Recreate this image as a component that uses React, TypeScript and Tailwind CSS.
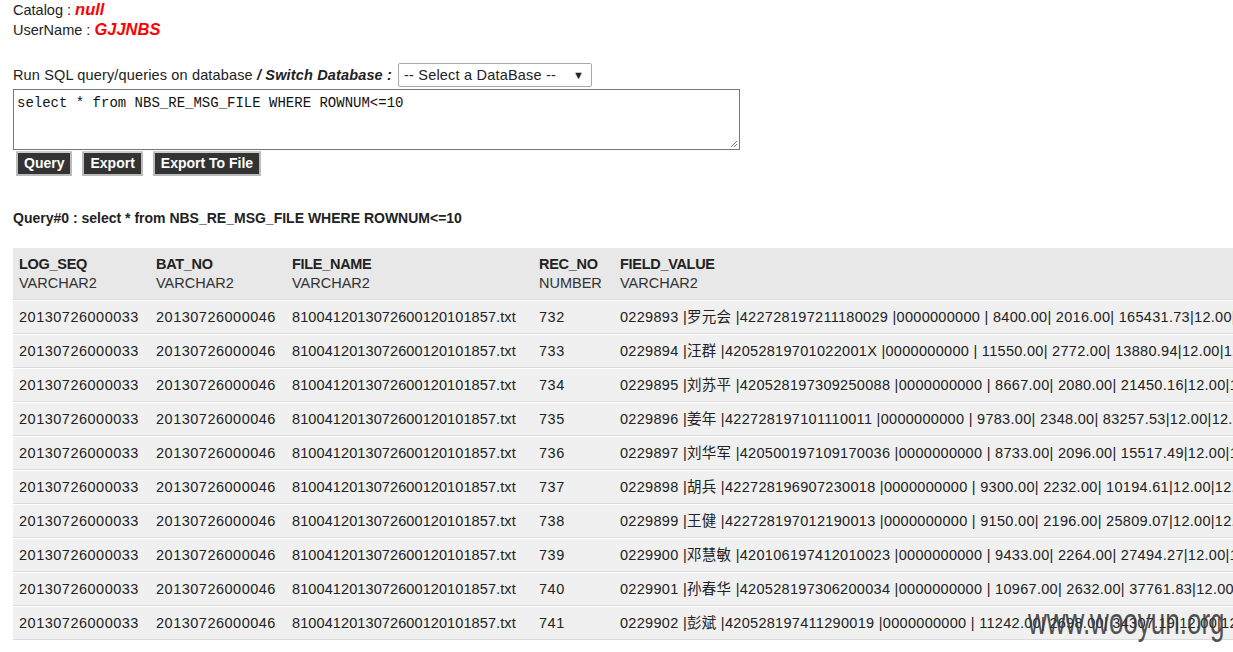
import React from "react";

const rows: [string, string][] = [
  ["732", "0229893 |罗元会 |422728197211180029 |0000000000 | 8400.00| 2016.00| 165431.73|12.00|12.00|12.00|"],
  ["733", "0229894 |汪群 |42052819701022001X |0000000000 | 11550.00| 2772.00| 13880.94|12.00|12.00|12.00|"],
  ["734", "0229895 |刘苏平 |420528197309250088 |0000000000 | 8667.00| 2080.00| 21450.16|12.00|12.00|12.00|"],
  ["735", "0229896 |姜年 |422728197101110011 |0000000000 | 9783.00| 2348.00| 83257.53|12.00|12.00|12.00|"],
  ["736", "0229897 |刘华军 |420500197109170036 |0000000000 | 8733.00| 2096.00| 15517.49|12.00|12.00|12.00|"],
  ["737", "0229898 |胡兵 |422728196907230018 |0000000000 | 9300.00| 2232.00| 10194.61|12.00|12.00|12.00|"],
  ["738", "0229899 |王健 |422728197012190013 |0000000000 | 9150.00| 2196.00| 25809.07|12.00|12.00|12.00|"],
  ["739", "0229900 |邓慧敏 |420106197412010023 |0000000000 | 9433.00| 2264.00| 27494.27|12.00|12.00|12.00|"],
  ["740", "0229901 |孙春华 |420528197306200034 |0000000000 | 10967.00| 2632.00| 37761.83|12.00|12.00|12.00|"],
  ["741", "0229902 |彭斌 |420528197411290019 |0000000000 | 11242.00| 2698.00| 34307.19|12.00|12.00|12.00|"],
];

const headers: [string, string, string][] = [
  ["LOG_SEQ", "VARCHAR2", "w-[137px] shrink-0"],
  ["BAT_NO", "VARCHAR2", "w-[136px] shrink-0"],
  ["FILE_NAME", "VARCHAR2", "w-[247px] shrink-0"],
  ["REC_NO", "NUMBER", "w-[81px] shrink-0"],
  ["FIELD_VALUE", "VARCHAR2", "flex-1"],
];

function Btn({ children }: { children: React.ReactNode }) {
  return (
    <button className="h-[25px] px-[6px] bg-[#333] text-white font-bold border-2 border-[#bbb] border-t-[#ccc] text-[14px] leading-[19px]">
      {children}
    </button>
  );
}

export default function App() {
  return (
    <div className="relative w-[1233px] h-[652px] overflow-hidden bg-white text-[#222] text-[14.5px] leading-[20px] font-['Liberation_Sans','Noto_Sans_CJK_SC',sans-serif]">
      <div className="pl-[13px]">
        <div className="h-[20px]">
          Catalog : <span className="font-bold italic text-[#ff0000] text-[16.5px] leading-[16px]">null</span>
        </div>
        <div className="h-[20px]">
          UserName : <span className="font-bold italic text-[#ff0000] text-[16.5px] leading-[16px]">GJJNBS</span>
        </div>
        <div className="mt-[23px] flex items-center h-[24px]">
          <span className="tracking-[0.15px]">
            Run SQL query/queries on database <span className="font-bold italic">/ Switch Database :</span>
          </span>
          <div className="ml-[6px] flex items-center justify-between h-[24px] w-[194px] border border-[#a9a9a9] rounded-[2px] pl-[5px] pr-[7px] bg-white">
            <span className="tracking-[0.2px]">-- Select a DataBase --</span>
            <span className="text-[11px]">▼</span>
          </div>
        </div>
        <div className="mt-[2px] relative w-[727px] h-[61px] border border-[#767676] bg-white px-[3px] pt-[4px]">
          <div className="font-['Liberation_Mono',monospace] text-[14px] leading-[18px] text-[#111]">
            select * from NBS_RE_MSG_FILE WHERE ROWNUM&lt;=10
          </div>
          <svg className="absolute right-[1px] bottom-[1px]" width="9" height="9" viewBox="0 0 9 9">
            <path d="M8 2 L2 8 M8 5 L5 8" stroke="#777" strokeWidth="1" />
          </svg>
        </div>
        <div className="mt-[1px] flex gap-[10px] pl-[3px]">
          <Btn>Query</Btn>
          <Btn>Export</Btn>
          <Btn>Export To File</Btn>
        </div>
        <div className="mt-[32px] font-bold text-[14px]">
          Query#0 : select * from NBS_RE_MSG_FILE WHERE ROWNUM&lt;=10
        </div>
      </div>
      <div className="mt-[20px] ml-[13px] w-[1400px]">
        <div className="flex h-[52px] items-center bg-[#e8e8e8] border-b border-[#dcdcdc]">
          {headers.map(([a, b, w]) => (
            <div key={a} className={`${w} pl-[6px] leading-[19px]`}>
              <div className="font-bold tracking-[-0.3px]">{a}</div>
              <div className="text-[#333]">{b}</div>
            </div>
          ))}
        </div>
        {rows.map(([rec, val]) => (
          <div
            key={rec}
            className="flex h-[34px] items-center bg-[#f0f0f0] border-t border-white border-b border-b-[#dcdcdc] whitespace-nowrap"
          >
            <div className="w-[137px] shrink-0 pl-[6px] tracking-[0.5px]">20130726000033</div>
            <div className="w-[136px] shrink-0 pl-[6px] tracking-[0.5px]">20130726000046</div>
            <div className="w-[247px] shrink-0 pl-[6px] tracking-[0.1px]">8100412013072600120101857.txt</div>
            <div className="w-[81px] shrink-0 pl-[6px] tracking-[0.5px]">{rec}</div>
            <div className="flex-1 pl-[6px] tracking-[0.3px]">{val}</div>
          </div>
        ))}
      </div>
      <div className="absolute left-[1028px] top-[614px] text-[26px] leading-[26px] text-[#333]/85 scale-y-[1.4] origin-bottom font-['Liberation_Sans',sans-serif]">
        www.wooyun.org
      </div>
    </div>
  );
}
